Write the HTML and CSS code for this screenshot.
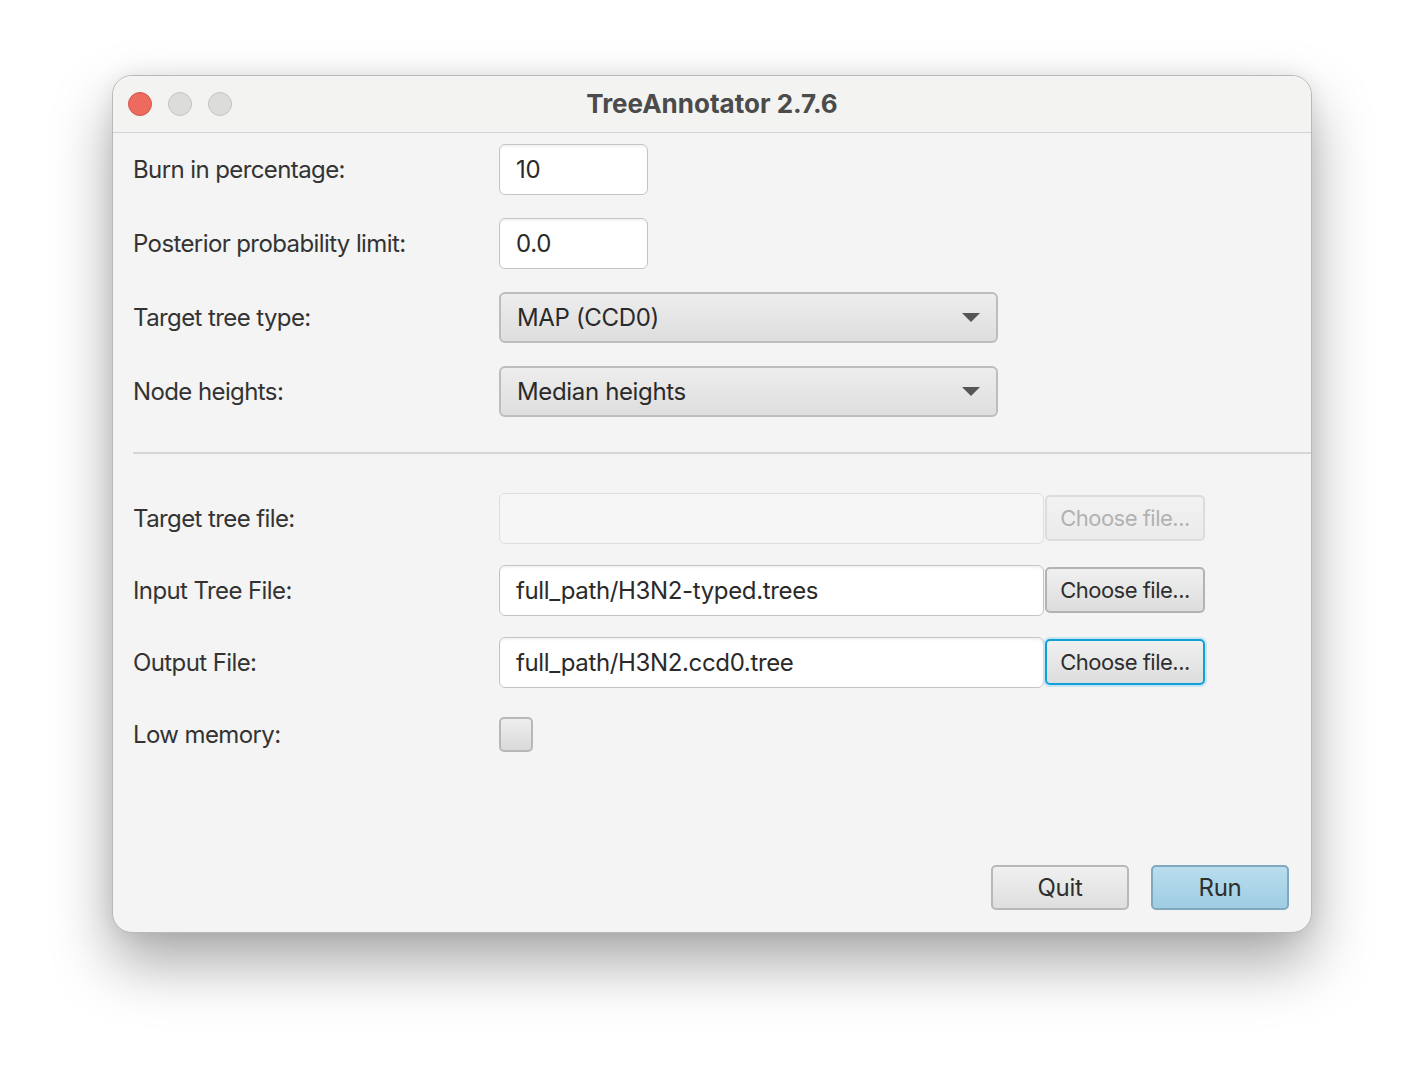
FILE: index.html
```html
<!DOCTYPE html>
<html lang="en">
<head>
    <meta charset="UTF-8">
    <meta name="viewport" content="width=device-width, initial-scale=1.0">
    <title>TreeAnnotator 2.7.6</title>
    <link rel="stylesheet" href="styles.css">
</head>
<body>
    <div class="window">
        <div class="titlebar">
            <div class="lights">
                <span class="light close"></span>
                <span class="light"></span>
                <span class="light"></span>
            </div>
            <h1>TreeAnnotator 2.7.6</h1>
        </div>

        <div class="content">
            <div class="section">
                <div class="row">
                    <label>Burn in percentage:</label>
                    <div class="field small">10</div>
                </div>
                <div class="row">
                    <label>Posterior probability limit:</label>
                    <div class="field small">0.0</div>
                </div>
                <div class="row">
                    <label>Target tree type:</label>
                    <div class="combo">MAP (CCD0)<span class="arrow"></span></div>
                </div>
                <div class="row">
                    <label>Node heights:</label>
                    <div class="combo">Median heights<span class="arrow"></span></div>
                </div>
            </div>

            <hr class="separator">

            <div class="section files">
                <div class="row">
                    <label>Target tree file:</label>
                    <div class="field wide disabled"></div>
                    <button class="choose" disabled>Choose file...</button>
                </div>
                <div class="row">
                    <label>Input Tree File:</label>
                    <div class="field wide">full_path/H3N2-typed.trees</div>
                    <button class="choose">Choose file...</button>
                </div>
                <div class="row">
                    <label>Output File:</label>
                    <div class="field wide">full_path/H3N2.ccd0.tree</div>
                    <button class="choose focused">Choose file...</button>
                </div>
                <div class="row">
                    <label>Low memory:</label>
                    <span class="checkbox"></span>
                </div>
            </div>

            <div class="actions">
                <button class="action">Quit</button>
                <button class="action default">Run</button>
            </div>
        </div>
    </div>
</body>
</html>
```

FILE: styles.css
```css
body {
    margin: 0;
    min-height: 1080px;
    background-color: #ffffff;
    font-family: Inter, "Noto Sans", sans-serif;
    color: #2e2e2e;
}

.window {
    box-sizing: border-box;
    width: 1200px;
    height: 858px;
    margin: 75px 0 0 112px;
    display: flex;
    flex-direction: column;
    background-color: #f4f4f4;
    border: 1px solid #b9b9b9;
    border-radius: 20px;
    box-shadow: 0 30px 60px rgba(0, 0, 0, 0.34), 0 0 20px rgba(0, 0, 0, 0.08);
    overflow: hidden;
}

/* Title bar */
.titlebar {
    position: relative;
    height: 56px;
    display: flex;
    align-items: center;
    justify-content: center;
    background-color: #f3f3f2;
    border-bottom: 1px solid #d3d3d3;
}

.titlebar h1 {
    margin: 0 0 2px 0;
    font-size: 26px;
    font-weight: 700;
    color: #4b4b4b;
}

.lights {
    position: absolute;
    left: 15px;
    top: 16px;
    display: flex;
    gap: 16px;
}

.light {
    width: 22px;
    height: 22px;
    border-radius: 50%;
    background-color: #dcdcdb;
    border: 1px solid #c2c2c2;
}

.light.close {
    background-color: #ed6a5e;
    border-color: #d4544a;
}

/* Form */
.content {
    flex: 1;
    display: flex;
    flex-direction: column;
    padding: 11px 0 0 20px;
}

.section {
    display: flex;
    flex-direction: column;
    gap: 24px;
}

.section.files {
    gap: 22px;
}

.row {
    display: flex;
    align-items: center;
    height: 50px;
}

.row label {
    width: 366px;
    font-size: 24px;
    letter-spacing: -0.6px;
    color: #333333;
}

.field {
    box-sizing: border-box;
    height: 51px;
    padding: 0 16px;
    display: flex;
    align-items: center;
    font-size: 24px;
    letter-spacing: -0.35px;
    color: #2a2a2a;
    background-color: #ffffff;
    border: 1px solid #c4c4c4;
    border-radius: 6px;
    box-shadow: inset 0 2px 2px rgba(0, 0, 0, 0.05);
}

.field.small {
    width: 149px;
}

.field.wide {
    width: 545px;
}

.field.disabled {
    background-color: #f6f6f6;
    border-color: #dedede;
    box-shadow: none;
}

.combo {
    box-sizing: border-box;
    width: 499px;
    height: 51px;
    padding: 0 16px 0 16px;
    display: flex;
    align-items: center;
    justify-content: space-between;
    font-size: 24px;
    letter-spacing: -0.35px;
    color: #2a2a2a;
    background: linear-gradient(#ededed, #dedede);
    border: 2px solid #bdbdbd;
    border-radius: 6px;
}

.arrow {
    width: 0;
    height: 0;
    border-left: 9px solid transparent;
    border-right: 9px solid transparent;
    border-top: 9px solid #555555;
}

.separator {
    margin: 36px 0 39px 0;
    border: none;
    border-top: 2px solid #d6d6d6;
}

.choose {
    box-sizing: border-box;
    width: 160px;
    height: 46px;
    margin-left: 1px;
    padding: 0;
    font-family: Inter, "Noto Sans", sans-serif;
    font-size: 22px;
    letter-spacing: -0.5px;
    color: #2e2e2e;
    background: linear-gradient(#f0f0f0, #dddddd);
    border: 2px solid #b3b3b3;
    border-radius: 5px;
}

.choose:disabled {
    color: #b2b2b2;
    background: linear-gradient(#f2f2f2, #ebebeb);
    border-color: #dcdcdc;
}

.choose.focused {
    border: 2px solid #0fa0d8;
    box-shadow: 0 0 0 2px #c6e4f1;
}

.checkbox {
    box-sizing: border-box;
    width: 34px;
    height: 35px;
    background: linear-gradient(#eeeeee, #d9d9d9);
    border: 2px solid #b8b8b8;
    border-radius: 5px;
}

/* Bottom buttons */
.actions {
    margin-top: auto;
    display: flex;
    justify-content: flex-end;
    gap: 22px;
    padding: 0 22px 22px 0;
}

.action {
    box-sizing: border-box;
    width: 138px;
    height: 45px;
    font-family: Inter, "Noto Sans", sans-serif;
    font-size: 24px;
    letter-spacing: -0.3px;
    color: #2e2e2e;
    background: linear-gradient(#f0f0f0, #dedede);
    border: 2px solid #b8b8b8;
    border-radius: 5px;
}

.action.default {
    background: linear-gradient(#b8ddee, #9fcde2);
    border-color: #80a9c0;
}
```
